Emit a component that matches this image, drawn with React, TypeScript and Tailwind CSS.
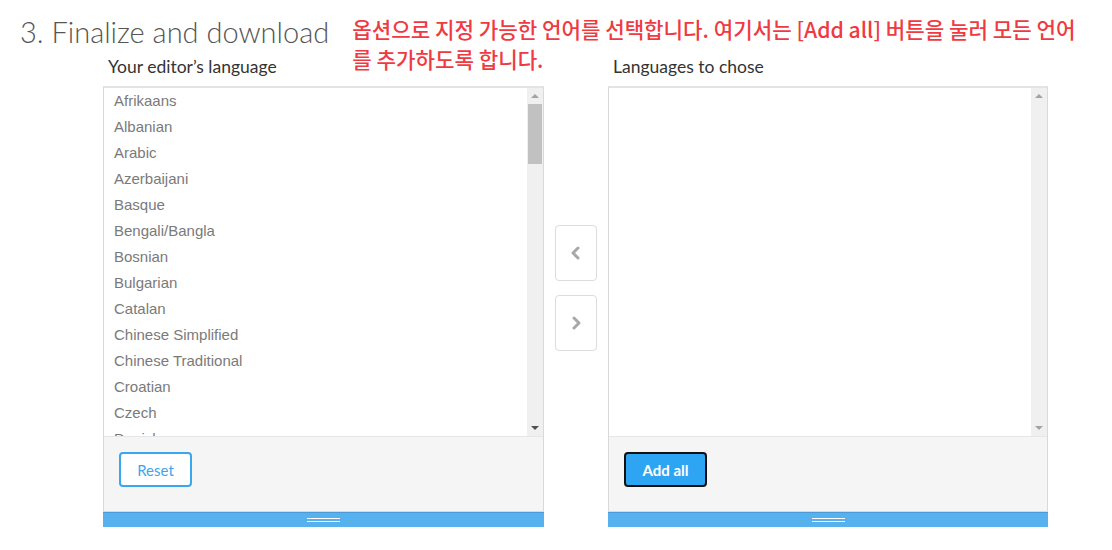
const languages = [
  'Afrikaans',
  'Albanian',
  'Arabic',
  'Azerbaijani',
  'Basque',
  'Bengali/Bangla',
  'Bosnian',
  'Bulgarian',
  'Catalan',
  'Chinese Simplified',
  'Chinese Traditional',
  'Croatian',
  'Czech',
  'Danish',
];

function Scrollbar({ thumb }: { thumb: boolean }) {
  return (
    <div className="w-[16px] shrink-0 bg-[#f0f0f0] flex flex-col items-center">
      <div className="h-[16px] flex items-center justify-center">
        <div className="w-0 h-0 border-x-[4px] border-x-transparent border-b-[4px] border-b-[#a3a3a3]" />
      </div>
      <div className="flex-1 w-full px-[1px]">
        {thumb && <div className="h-[60px] bg-[#c1c1c1]" />}
      </div>
      <div className="h-[16px] flex items-center justify-center">
        <div className={`w-0 h-0 border-x-[4px] border-x-transparent border-t-[4px] ${thumb ? 'border-t-[#505050]' : 'border-t-[#a3a3a3]'}`} />
      </div>
    </div>
  );
}

function Grip() {
  return (
    <div className="h-[15px] bg-[#58b1ef] border-t border-[#4a9bd8] flex items-center justify-center">
      <div className="w-[33px] flex flex-col gap-[2px]">
        <div className="h-px bg-white" />
        <div className="h-px bg-white" />
      </div>
    </div>
  );
}

function Chevron({ dir }: { dir: 'left' | 'right' }) {
  return (
    <svg width="12" height="14" viewBox="0 0 12 14" fill="none">
      <polyline
        points={dir === 'left' ? '8,2 3,7 8,12' : '4,2 9,7 4,12'}
        stroke="#a8a8a8"
        strokeWidth="3"
        strokeLinecap="round"
        strokeLinejoin="round"
      />
    </svg>
  );
}

export default function App() {
  const font = { fontFamily: 'Lato, "Noto Sans", sans-serif' };
  return (
    <div className="w-[1112px] h-[550px] bg-white overflow-hidden" style={font}>
      <div className="flex items-start pt-[14px] h-[54px]">
        <h1 className="ml-[20px] text-[29px] leading-[36px] font-light text-[#555]">3. Finalize and download</h1>
        <p
          className="ml-[23px] text-[21.2px] leading-[30px] font-medium text-[#f03a42]"
          style={{ fontFamily: '"Noto Sans CJK KR", sans-serif' }}
        >
          옵션으로 지정 가능한 언어를 선택합니다. 여기서는 [Add all] 버튼을 눌러 모든 언어
          <br />를 추가하도록 합니다.
        </p>
      </div>

      <div className="flex items-start pl-[103px]">
        {/* left column */}
        <div className="w-[441px] flex flex-col">
          <div className="pl-[5px] h-[32px] text-[17.5px] leading-[26px] text-[#333]">Your editor’s language</div>
          <div className="border border-[#d9d9d9] border-t-[2px] border-t-[#e3e3e3] flex flex-col">
            <div className="h-[349px] flex border-b border-[#e6e6e6]">
              <div className="flex-1 overflow-hidden pl-[10px]" style={{ fontFamily: '"Liberation Sans", Arial, sans-serif' }}>
                {languages.map((l) => (
                  <div key={l} className="h-[26px] leading-[26px] text-[15px] text-[#7a7a7a]">{l}</div>
                ))}
              </div>
              <Scrollbar thumb />
            </div>
            <div className="h-[74px] bg-[#f5f5f5] pl-[15px] pt-[15px]">
              <button className="w-[73px] h-[35px] border-2 border-[#3aa6ef] rounded-[4px] bg-white text-[15px] leading-[20px] text-[#3aa6ef]">
                Reset
              </button>
            </div>
          </div>
          <Grip />
        </div>

        {/* middle buttons */}
        <div className="w-[64px] flex flex-col items-center gap-[14px] pt-[171px]">
          <button className="w-[42px] h-[56px] border border-[#dcdcdc] rounded-[4px] bg-white flex items-center justify-center">
            <Chevron dir="left" />
          </button>
          <button className="w-[42px] h-[56px] border border-[#dcdcdc] rounded-[4px] bg-white flex items-center justify-center">
            <Chevron dir="right" />
          </button>
        </div>

        {/* right column */}
        <div className="w-[440px] flex flex-col">
          <div className="pl-[5px] h-[32px] text-[17.5px] leading-[26px] text-[#333]">Languages to chose</div>
          <div className="border border-[#d9d9d9] border-t-[2px] border-t-[#e3e3e3] flex flex-col">
            <div className="h-[349px] flex border-b border-[#e6e6e6]">
              <div className="flex-1" />
              <Scrollbar thumb={false} />
            </div>
            <div className="h-[74px] bg-[#f5f5f5] pl-[15px] pt-[15px]">
              <button className="w-[83px] h-[35px] border-2 border-[#111] rounded-[4px] bg-[#2ea5f3] text-[15px] leading-[20px] font-bold text-white">
                Add all
              </button>
            </div>
          </div>
          <Grip />
        </div>
      </div>
    </div>
  );
}
